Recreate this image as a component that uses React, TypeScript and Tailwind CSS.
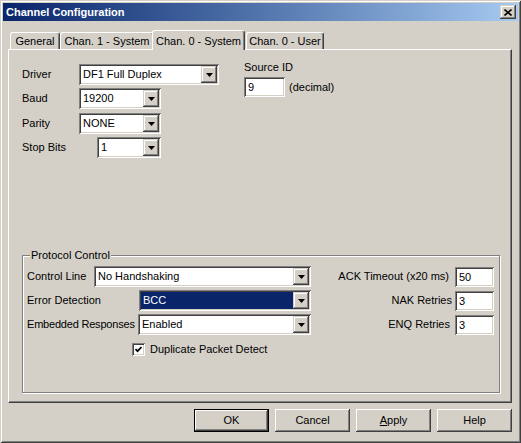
import React from 'react'

// classic 3D edges
const sunken =
  'shadow-[inset_1px_1px_#808080,inset_-1px_-1px_#ffffff,inset_2px_2px_#404040,inset_-2px_-2px_#d4d0c8]'
const raised =
  'shadow-[inset_-1px_-1px_#404040,inset_1px_1px_#ffffff,inset_-2px_-2px_#808080,inset_2px_2px_#d4d0c8]'
const raisedSmall =
  'shadow-[inset_-1px_-1px_#404040,inset_1px_1px_#d4d0c8,inset_-2px_-2px_#808080,inset_2px_2px_#ffffff]'

function Arrow() {
  return (
    <svg width="7" height="4" viewBox="0 0 7 4">
      <polygon points="0,0 7,0 3.5,4" fill="#000" />
    </svg>
  )
}

interface ComboProps {
  className: string
  value: string
  selected?: boolean
}

function Combo({ className, value, selected }: ComboProps) {
  return (
    <div className={`flex h-[21px] shrink-0 bg-white p-[2px] ${sunken} ${className}`}>
      <div
        className={`flex-1 overflow-hidden whitespace-nowrap px-[2px] leading-[17px] ${
          selected ? 'bg-[#0a246a] text-white' : ''
        }`}
      >
        {value}
      </div>
      <div className={`flex h-[17px] w-[16px] items-center justify-center bg-[#d4d0c8] ${raisedSmall}`}>
        <Arrow />
      </div>
    </div>
  )
}

function TextField({ className, value }: { className: string; value: string }) {
  return (
    <div className={`h-[20px] shrink-0 bg-white px-[4px] leading-[20px] ${sunken} ${className}`}>{value}</div>
  )
}

function Label({ className, children }: { className: string; children: React.ReactNode }) {
  return <span className={`shrink-0 whitespace-nowrap ${className}`}>{children}</span>
}

function Tab({ label, className }: { label: string; className: string }) {
  return (
    <div
      className={`flex h-[17px] items-center justify-center whitespace-nowrap rounded-t-[3px] border-l border-t border-r border-white border-r-[#404040] shadow-[inset_-1px_0_#808080] ${className}`}
    >
      {label}
    </div>
  )
}

function Button({ children, isDefault }: { children: React.ReactNode; isDefault?: boolean }) {
  return (
    <div
      className={`flex h-[23px] w-[75px] items-center justify-center ${
        isDefault
          ? 'shadow-[inset_0_0_0_1px_#000000,inset_-2px_-2px_#404040,inset_2px_2px_#ffffff,inset_-3px_-3px_#808080]'
          : raised
      }`}
    >
      {children}
    </div>
  )
}

export default function App() {
  return (
    <div className="h-[443px] w-[521px] bg-[#d4d0c8] p-[3px] font-['Liberation_Sans',Arial,sans-serif] text-[11px] text-black shadow-[inset_1px_1px_#d4d0c8,inset_-1px_-1px_#404040,inset_2px_2px_#ffffff,inset_-2px_-2px_#808080]">
      {/* title bar */}
      <div className="flex h-[18px] items-center justify-between bg-linear-to-r from-[#0a246a] to-[#a6caf0] pl-[3px] pr-[2px]">
        <span className="text-[11px] font-bold text-white">Channel Configuration</span>
        <div className={`flex h-[14px] w-[16px] items-center justify-center bg-[#d4d0c8] ${raisedSmall}`}>
          <svg width="8" height="7" viewBox="0 0 8 7">
            <path d="M0.5 0.5 L7.5 6.5 M7.5 0.5 L0.5 6.5" stroke="#000" strokeWidth="1.6" />
          </svg>
        </div>
      </div>

      {/* tabs */}
      <div className="mt-[9px] flex h-[19px] items-end pl-[7px]">
        <Tab label="General" className="w-[50px]" />
        <Tab label="Chan. 1 - System" className="w-[94px]" />
        <div className="relative z-10 -mb-[1px] ml-[-2px] mr-[1px] flex h-[20px] w-[93px] items-start justify-center whitespace-nowrap rounded-t-[3px] border-l border-t border-r border-white border-r-[#404040] bg-[#d4d0c8] pt-[2px] shadow-[inset_-1px_0_#808080]">
          Chan. 0 - System
        </div>
        <Tab label="Chan. 0 - User" className="w-[78px]" />
      </div>

      {/* tab panel */}
      <div className="ml-[5px] h-[354px] w-[504px] border-l border-t border-r border-b border-white border-r-[#404040] border-b-[#404040] shadow-[inset_-1px_-1px_#808080]">
        <div className="flex pl-[13px] pt-[14px]">
          <div className="w-[222px]">
            <div className="flex h-[21px] items-center">
              <Label className="w-[57px]">Driver</Label>
              <Combo className="w-[140px]" value="DF1 Full Duplex" />
            </div>
            <div className="mt-[3px] flex h-[21px] items-center">
              <Label className="w-[57px]">Baud</Label>
              <Combo className="w-[82px]" value="19200" />
            </div>
            <div className="mt-[4px] flex h-[21px] items-center">
              <Label className="w-[57px]">Parity</Label>
              <Combo className="w-[82px]" value="NONE" />
            </div>
            <div className="mt-[3px] flex h-[21px] items-center">
              <Label className="w-[75px]">Stop Bits</Label>
              <Combo className="w-[64px]" value="1" />
            </div>
          </div>
          <div className="flex flex-col">
            <span className="-mt-[3px] leading-[13px]">Source ID</span>
            <div className="mt-[3px] flex items-center">
              <TextField className="w-[41px]" value="9" />
              <span className="ml-[4px]">(decimal)</span>
            </div>
          </div>
        </div>

        {/* protocol control group */}
        <div className="relative ml-[13px] mt-[97px] h-[138px] w-[478px] border border-[#808080] pl-[4px] pr-[5px] pt-[10px] shadow-[inset_1px_1px_#ffffff,1px_1px_#ffffff]">
          <span className="absolute left-[7px] top-[-7px] bg-[#d4d0c8] px-[1px] leading-[13px]">
            Protocol Control
          </span>
          <div className="flex h-[21px] items-center">
            <Label className="w-[67px]">Control Line</Label>
            <Combo className="w-[217px]" value="No Handshaking" />
            <span className="flex-1 whitespace-nowrap text-right">ACK Timeout (x20 ms)</span>
            <TextField className="ml-[6px] w-[39px]" value="50" />
          </div>
          <div className="mt-[3px] flex h-[21px] items-center">
            <Label className="w-[112px]">Error Detection</Label>
            <Combo className="w-[172px]" value="BCC" selected />
            <span className="flex-1 whitespace-nowrap text-right">NAK Retries</span>
            <TextField className="ml-[3px] w-[39px]" value="3" />
          </div>
          <div className="mt-[3px] flex h-[21px] items-center">
            <Label className="w-[111px] tracking-[-0.2px]">Embedded Responses</Label>
            <Combo className="w-[173px]" value="Enabled" />
            <span className="flex-1 whitespace-nowrap text-right">ENQ Retries</span>
            <TextField className="ml-[5px] w-[39px]" value="3" />
          </div>
          <div className="mt-[6px] ml-[105px] flex items-center">
            <div className={`flex h-[13px] w-[13px] items-center justify-center bg-white ${sunken}`}>
              <svg width="7" height="7" viewBox="0 0 7 7">
                <path d="M0.5 3 L2.5 5.2 L6.5 1" stroke="#000" strokeWidth="1.8" fill="none" />
              </svg>
            </div>
            <span className="ml-[5px]">Duplicate Packet Detect</span>
          </div>
        </div>
      </div>

      {/* buttons */}
      <div className="mr-[6px] mt-[6px] flex justify-end gap-[6px]">
        <Button isDefault>OK</Button>
        <Button>Cancel</Button>
        <Button>
          <span>
            <span className="underline">A</span>pply
          </span>
        </Button>
        <Button>Help</Button>
      </div>
    </div>
  )
}
